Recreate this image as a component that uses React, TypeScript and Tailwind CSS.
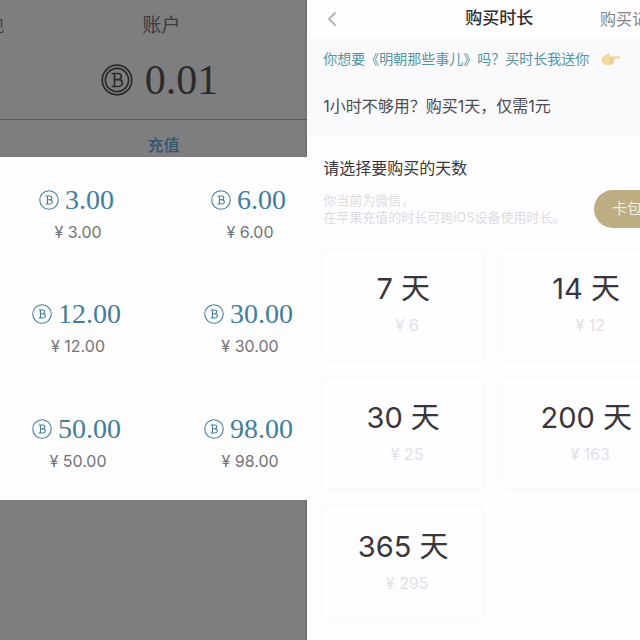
import { ChevronLeft } from 'lucide-react';

interface Amount {
  coins: string;
  price: string;
}

interface Plan {
  days: string;
  price: string;
}

const amounts: Amount[] = [
  { coins: '3.00', price: '3.00' },
  { coins: '6.00', price: '6.00' },
  { coins: '12.00', price: '12.00' },
  { coins: '30.00', price: '30.00' },
  { coins: '50.00', price: '50.00' },
  { coins: '98.00', price: '98.00' }
];

const plans: Plan[] = [
  { days: '7', price: '6' },
  { days: '14', price: '12' },
  { days: '30', price: '25' },
  { days: '200', price: '163' },
  { days: '365', price: '295' }
];

function CoinIcon({ className, double = false }: { className: string; double?: boolean }) {
  return (
    <svg viewBox="0 0 32 32" className={className} fill="none" stroke="currentColor" strokeWidth="1.7" aria-hidden="true">
      <circle cx="16" cy="16" r="14.8" />
      {double && <circle cx="16" cy="16" r="11.6" />}
      <path d="M10.500 9.500h6.500c4.500 0 4.500 6 0 6.200H13.500M17 15.700c5.800 0 5.800 6.800 0 6.800H10.500M13.500 9.500v13" />
    </svg>
  );
}

function PointingHand() {
  return (
    <svg viewBox="0 0 20 14" className="h-[14px] w-5" aria-hidden="true">
      <path d="M1 5.500C3 4.500 5 2.500 7 1.500c1.500-.6 2.500.6 1.500 1.700L7.800 4.300H18c1.700 0 1.700 2.400 0 2.400h-5.500c1.500.3 1.300 2.200 0 2.300.8.6.5 2-.6 2.100.3 1.300-.5 1.900-1.700 1.900H6C4 13 3 11.500 1 11Z" fill="#f3d6a0" />
      <path d="M9 6.700h3.500M9 9h3.300M8.800 11.100h2.800" stroke="#dfba7c" strokeWidth=".7" />
    </svg>
  );
}

// Account page dimmed behind the top-up sheet
function AccountPanel() {
  return (
    <section className="flex h-full flex-col overflow-hidden bg-[#7e7d7f] shadow-[inset_-2px_0_0_#737274]">
      <header className="relative flex h-[52px] items-center justify-center pl-4 text-[#3b3b3d]">
        <a href="#discover" className="absolute right-full -mr-1 text-base whitespace-nowrap">发现</a>
        <h1 className="text-[19px]">账户</h1>
      </header>
      <div className="flex h-[67px] shrink-0 items-center justify-center gap-3 pt-1 pb-4 pl-3 text-[#2b2b2d]">
        <CoinIcon double className="size-8" />
        <span className="font-['Liberation_Serif',serif] text-[42px] leading-none">0.01</span>
      </div>
      <button className="h-[38px] shrink-0 border-t border-[#3f5b76] pt-3 pl-5 text-base font-medium text-[#2f5673]">充值</button>
      <div className="grid h-[343px] shrink-0 grid-cols-[156px_188px] grid-rows-3 bg-[#fefdfe]">
        {amounts.map((a) => (
          <button key={a.coins} className="flex flex-col items-center justify-center gap-1">
            <span className="flex items-center gap-[6px] pr-[3px] text-[#427e9c]">
              <CoinIcon className="size-5" />
              <span className="font-['Liberation_Serif',serif] text-[28px] leading-8">{a.coins}</span>
            </span>
            <span className="text-base leading-6 text-[#737277]">¥ {a.price}</span>
          </button>
        ))}
      </div>
    </section>
  );
}

function PlanCard({ plan }: { plan: Plan }) {
  return (
    <button className="flex h-[109px] flex-col items-center justify-center rounded-sm bg-[#fefdff] shadow-[0_0_5px_2px_#faf8fc]">
      <span className="text-[29px] leading-10 text-[#39363b]">{plan.days} 天</span>
      <span className="pl-2 text-base leading-8 text-[#e3e0e7]">¥ {plan.price}</span>
    </button>
  );
}

function DurationPanel() {
  return (
    <section className="min-w-0 overflow-hidden bg-[#fefdff]">
      <header className="grid h-[38px] grid-cols-[132px_1fr_40px] items-center">
        <button aria-label="返回" className="pl-[13px] text-[#b5b5b7]">
          <ChevronLeft className="size-6" />
        </button>
        <h2 className="pl-[26px] text-[17px] font-medium text-[#2f2f31]">购买时长</h2>
        <a href="#records" className="text-base whitespace-nowrap text-[#858588]">购买记录</a>
      </header>
      <div className="h-[98px] bg-[#faf9fc] px-4 whitespace-nowrap">
        <a href="#gift" className="flex h-[42px] items-center gap-3 text-sm text-[#5495a3]">
          你想要《明朝那些事儿》吗？买时长我送你
          <PointingHand />
        </a>
        <p className="pt-[14px] text-base text-[#4c4b4f]">1小时不够用？购买1天，仅需1元</p>
      </div>
      <h3 className="px-4 pt-5 text-base text-[#39383b]">请选择要购买的天数</h3>
      <div className="flex h-[58px] items-center justify-between pl-4 whitespace-nowrap">
        <p className="text-[13px] leading-[17px] text-[#dddbe0]">
          你当前为微信，<br />
          在苹果充值的时长可跨iOS设备使用时长。
        </p>
        <button className="-mr-8 h-[38px] w-[78px] shrink-0 rounded-full bg-[#bcad82] pr-3 text-[15px] text-[#f3edda]">卡包</button>
      </div>
      <div className="grid grid-cols-[160px_166px] gap-x-5 gap-y-5 px-4 pt-3">
        {plans.map((p) => <PlanCard key={p.days} plan={p} />)}
      </div>
    </section>
  );
}

export default function App() {
  return (
    <main className="grid h-screen grid-cols-[48%_52%] overflow-hidden font-['Inter','Noto_Sans_CJK_SC',sans-serif]">
      <AccountPanel />
      <DurationPanel />
    </main>
  );
}
